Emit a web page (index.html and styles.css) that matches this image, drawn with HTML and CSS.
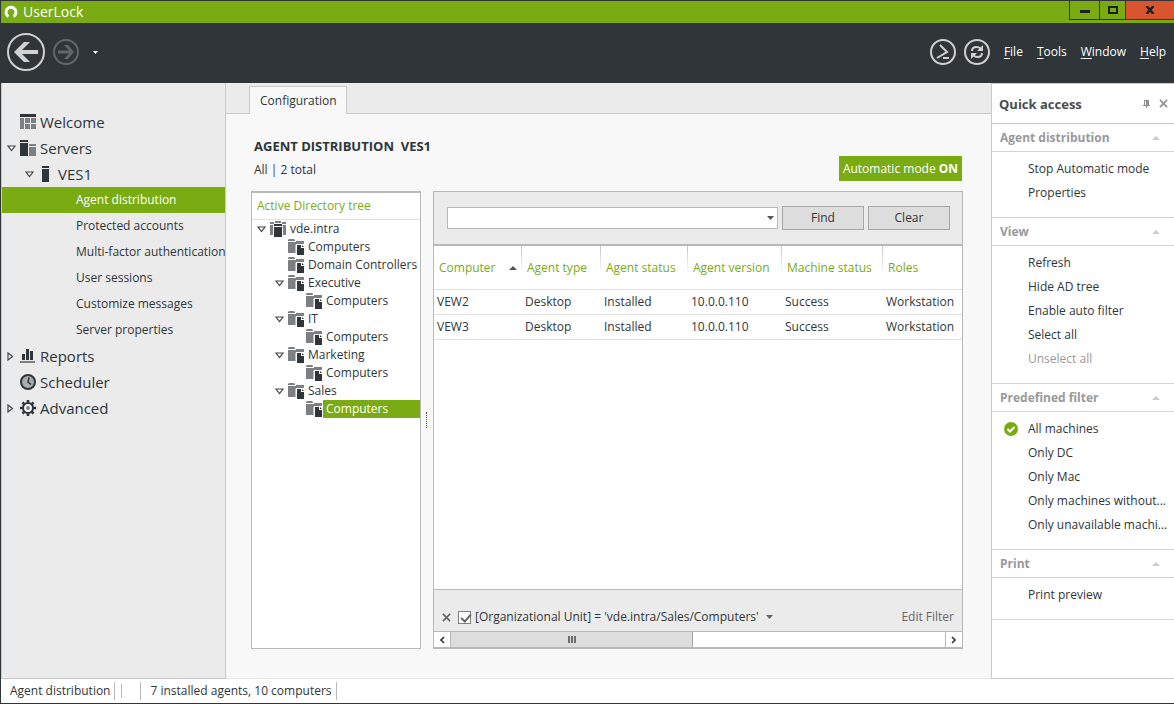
FILE: index.html
```html
<!DOCTYPE html>
<html lang="en">
<head>
    <meta charset="UTF-8">
    <meta name="viewport" content="width=device-width, initial-scale=1.0">
    <title>UserLock</title>
    <link rel="stylesheet" href="styles.css">
</head>
<body>
    <!-- Shared icons -->
    <svg class="icon-defs" aria-hidden="true">
        <symbol id="open" viewBox="0 0 9 7"><path d="M1 1h7L4.500 5.500z" fill="#fff" stroke="#404548" stroke-width="1.200"/></symbol>
        <symbol id="closed" viewBox="0 0 7 9"><path d="M1 1v7L5.500 4.500z" fill="#fff" stroke="#404548" stroke-width="1.200"/></symbol>
        <symbol id="folder" viewBox="0 0 16 16">
            <path d="M0 1l1-1h5l1 1v1H0zM0 3h8V2h8v3H8v9H0z" fill="#7c8083"/>
            <path d="M8 15V5.500h8" fill="none" stroke="#fff"/>
            <path d="M9 6h4v3h3v7H9z" fill="#2f3538"/>
            <path d="M14 6l2 2h-2z" fill="#2f3538"/>
        </symbol>
        <symbol id="up" viewBox="0 0 8 4"><path d="M0 4l4-4 4 4z" fill="currentColor"/></symbol>
        <symbol id="down" viewBox="0 0 7 4"><path d="M0 0h7L3.500 4z" fill="currentColor"/></symbol>
        <symbol id="cross" viewBox="0 0 10 10"><path d="M1 1l8 8M9 1L1 9" fill="none" stroke="currentColor" stroke-width="1.700"/></symbol>
    </svg>

    <div class="window">
        <header class="titlebar">
            <svg class="logo" width="14" height="14" viewBox="0 0 14 14"><path d="M4.500 11.500A5 5 0 1 1 9.500 11.500" fill="none" stroke="#fff" stroke-width="3"/></svg>
            <span class="app-name">UserLock</span>
            <div class="window-buttons">
                <button class="win-btn minimize" aria-label="Minimize"><svg width="10" height="10" viewBox="0 0 10 10"><path d="M0 6.500h10" stroke="#1d2022" stroke-width="3"/></svg></button>
                <button class="win-btn maximize" aria-label="Maximize"><svg width="10" height="8" viewBox="0 0 10 8"><path d="M1 1h8v6H1z" fill="none" stroke="#1d2022" stroke-width="2"/></svg></button>
                <button class="win-btn close" aria-label="Close"><svg width="10" height="8" viewBox="0 0 10 8"><path d="M1.500 0l7 8M8.500 0l-7 8" stroke="#1d2022" stroke-width="2.400"/></svg></button>
            </div>
        </header>

        <div class="toolbar">
            <button class="tool-btn" aria-label="Back"><svg width="38" height="38" viewBox="0 0 38 38"><circle cx="19" cy="19" r="18" fill="none" stroke="#d0d2d2" stroke-width="2"/><path d="M7 19L17 9h6l-8 8h16v4H15l8 8h-6z" fill="#d0d2d2"/></svg></button>
            <button class="tool-btn" aria-label="Forward"><svg width="26" height="26" viewBox="0 0 26 26"><circle cx="13" cy="13" r="12" fill="none" stroke="#62676a" stroke-width="2"/><path d="M21 13l-6 7h-4l5-5.500H5v-3h11L11 6h4z" fill="#62676a"/></svg></button>
            <button class="tool-btn history" aria-label="History"><svg width="5" height="3"><use href="#down"/></svg></button>
            <nav class="menu">
                <button class="tool-btn" aria-label="PowerShell"><svg width="26" height="26" viewBox="0 0 26 26"><circle cx="13" cy="13" r="12" fill="none" stroke="#d0d2d2" stroke-width="2"/><path d="M10 6l7 7L7 19" fill="none" stroke="#d0d2d2" stroke-width="2"/><path d="M13 19h6" stroke="#d0d2d2" stroke-width="2"/></svg></button>
                <button class="tool-btn" aria-label="Refresh"><svg width="26" height="26" viewBox="0 0 26 26"><circle cx="13" cy="13" r="12" fill="none" stroke="#d0d2d2" stroke-width="2"/><path d="M8 12Q8 8 12.500 8Q15 8 16.500 9.500M18 14Q18 18 13.500 18Q11 18 9.500 16.500" fill="none" stroke="#d0d2d2" stroke-width="2"/><path d="M19 6v6h-6zM7 20v-6h6z" fill="#d0d2d2"/></svg></button>
                <a href="#"><u>F</u>ile</a>
                <a href="#"><u>T</u>ools</a>
                <a href="#"><u>W</u>indow</a>
                <a href="#"><u>H</u>elp</a>
            </nav>
        </div>

        <div class="content">
            <nav class="sidebar">
                <a class="nav-item" href="#"><span class="arrow"></span><svg width="16" height="16" viewBox="0 0 16 16"><path d="M0 0h16v3H0z" fill="#2f3538"/><path d="M0 4h4v11H0zM5 4h5v5H5zM11 4h5v5h-5zM5 10h5v5H5zM11 10h5v5h-5z" fill="#7c8083"/></svg>Welcome</a>
                <a class="nav-item" href="#"><span class="arrow"><svg width="9" height="7"><use href="#open"/></svg></span><svg width="16" height="16" viewBox="0 0 16 16"><path d="M0 0h8v2H0zM0 3h8v13H0z" fill="#2f3538"/><path d="M9 4h7v2H9zM9 7h7v9H9z" fill="#7c8083"/></svg>Servers</a>
                <a class="nav-item child" href="#"><span class="arrow"><svg width="9" height="7"><use href="#open"/></svg></span><svg width="16" height="16" viewBox="0 0 16 16"><path d="M4 0h7v2H4zM4 3h7v13H4z" fill="#2f3538"/></svg>VES1</a>
                <a class="nav-sub selected" href="#">Agent distribution</a>
                <a class="nav-sub" href="#">Protected accounts</a>
                <a class="nav-sub" href="#">Multi-factor authentication</a>
                <a class="nav-sub" href="#">User sessions</a>
                <a class="nav-sub" href="#">Customize messages</a>
                <a class="nav-sub" href="#">Server properties</a>
                <a class="nav-item" href="#"><span class="arrow"><svg width="7" height="9"><use href="#closed"/></svg></span><svg width="16" height="16" viewBox="0 0 16 16"><path d="M2 6h3v6H2zM6 1h3v11H6zM10 3h3v9h-3z" fill="#2f3538"/><path d="M0 13h15v2H0z" fill="#7c8083"/></svg>Reports</a>
                <a class="nav-item" href="#"><span class="arrow"></span><svg width="16" height="16" viewBox="0 0 16 16"><circle cx="8" cy="8" r="7" fill="#a9abac" stroke="#2f3538" stroke-width="2"/><path d="M9 3.500L8 8l3 2.500" fill="none" stroke="#2f3538" stroke-width="1.500"/></svg>Scheduler</a>
                <a class="nav-item" href="#"><span class="arrow"><svg width="7" height="9"><use href="#closed"/></svg></span><svg width="16" height="16" viewBox="0 0 16 16"><circle cx="8" cy="8" r="5" fill="#fff" stroke="#2f3538" stroke-width="2.200"/><path d="M8 0v3M8 13v3M0 8h3M13 8h3M2.500 2.500l2 2M11.500 11.500l2 2M2.500 13.500l2-2M11.500 4.500l2-2" stroke="#2f3538" stroke-width="2.600"/><circle cx="8" cy="8" r="2" fill="#7c8083"/></svg>Advanced</a>
            </nav>

            <main class="main">
                <div class="tabs"><button class="tab">Configuration</button></div>
                <div class="page">
                    <div class="page-head">
                        <div>
                            <h1>AGENT DISTRIBUTION&nbsp; VES1</h1>
                            <p>All | 2 total</p>
                        </div>
                        <button class="mode">Automatic mode <b>ON</b></button>
                    </div>
                    <div class="panels">
                        <section class="tree">
                            <h2>Active Directory tree</h2>
                            <ul>
                                <li><span class="arrow"><svg width="9" height="7"><use href="#open"/></svg></span><svg width="16" height="16" viewBox="0 0 16 16"><path d="M0 1h4v2H0zM0 4h3v10H0zM12 1h4v2h-4zM13 4h3v10h-3z" fill="#7c8083"/><path d="M4 3h8v2H4zM4 6h8v10H4z" fill="#2f3538"/><path d="M5 0h6v2H5z" fill="#7c8083"/></svg><span class="label">vde.intra</span></li>
                                <li class="level-1"><span class="arrow"></span><svg width="16" height="16"><use href="#folder"/></svg><span class="label">Computers</span></li>
                                <li class="level-1"><span class="arrow"></span><svg width="16" height="16"><use href="#folder"/></svg><span class="label">Domain Controllers</span></li>
                                <li class="level-1"><span class="arrow"><svg width="9" height="7"><use href="#open"/></svg></span><svg width="16" height="16"><use href="#folder"/></svg><span class="label">Executive</span></li>
                                <li class="level-2"><span class="arrow"></span><svg width="16" height="16"><use href="#folder"/></svg><span class="label">Computers</span></li>
                                <li class="level-1"><span class="arrow"><svg width="9" height="7"><use href="#open"/></svg></span><svg width="16" height="16"><use href="#folder"/></svg><span class="label">IT</span></li>
                                <li class="level-2"><span class="arrow"></span><svg width="16" height="16"><use href="#folder"/></svg><span class="label">Computers</span></li>
                                <li class="level-1"><span class="arrow"><svg width="9" height="7"><use href="#open"/></svg></span><svg width="16" height="16"><use href="#folder"/></svg><span class="label">Marketing</span></li>
                                <li class="level-2"><span class="arrow"></span><svg width="16" height="16"><use href="#folder"/></svg><span class="label">Computers</span></li>
                                <li class="level-1"><span class="arrow"><svg width="9" height="7"><use href="#open"/></svg></span><svg width="16" height="16"><use href="#folder"/></svg><span class="label">Sales</span></li>
                                <li class="level-2"><span class="arrow"></span><svg width="16" height="16"><use href="#folder"/></svg><span class="label selected">Computers</span></li>
                            </ul>
                        </section>
                        <div class="splitter"></div>
                        <section class="grid">
                            <form class="search">
                                <div class="combo">
                                    <input type="text" aria-label="Search text">
                                    <svg width="7" height="4"><use href="#down"/></svg>
                                </div>
                                <button type="button">Find</button>
                                <button type="button">Clear</button>
                            </form>
                            <div class="table-wrap">
                                <table>
                                    <colgroup><col class="col-computer"><col class="col-type"><col class="col-status"><col class="col-version"><col class="col-machine"><col></colgroup>
                                    <thead>
                                        <tr><th><div class="sorted">Computer <svg width="8" height="4"><use href="#up"/></svg></div></th><th>Agent type</th><th>Agent status</th><th>Agent version</th><th>Machine status</th><th>Roles</th></tr>
                                    </thead>
                                    <tbody>
                                        <tr><td>VEW2</td><td>Desktop</td><td>Installed</td><td>10.0.0.110</td><td>Success</td><td>Workstation</td></tr>
                                        <tr><td>VEW3</td><td>Desktop</td><td>Installed</td><td>10.0.0.110</td><td>Success</td><td>Workstation</td></tr>
                                    </tbody>
                                </table>
                            </div>
                            <div class="filter-bar">
                                <button class="plain" aria-label="Remove filter"><svg width="9" height="9"><use href="#cross"/></svg></button>
                                <input type="checkbox" id="filter-on" checked>
                                <label for="filter-on">[Organizational Unit] = 'vde.intra/Sales/Computers'</label>
                                <button class="plain recent" aria-label="Recent filters"><svg width="7" height="4"><use href="#down"/></svg></button>
                                <button class="plain edit">Edit Filter</button>
                            </div>
                            <div class="scrollbar">
                                <button aria-label="Scroll left"><svg width="6" height="8" viewBox="0 0 6 8"><path d="M5 1L2 4l3 3" fill="none" stroke="#333" stroke-width="1.600"/></svg></button>
                                <div class="track"><div class="thumb"><svg width="8" height="7" viewBox="0 0 8 7"><path d="M1 0v7M4 0v7M7 0v7" stroke="#6c6c6c" stroke-width="2"/></svg></div></div>
                                <button aria-label="Scroll right"><svg width="6" height="8" viewBox="0 0 6 8"><path d="M1 1l3 3-3 3" fill="none" stroke="#333" stroke-width="1.600"/></svg></button>
                            </div>
                        </section>
                    </div>
                </div>
            </main>

            <aside class="quick">
                <div class="quick-head">
                    <h2>Quick access</h2>
                    <button class="plain" aria-label="Pin"><svg width="7" height="8" viewBox="0 0 7 8"><path d="M1 0h5v5H1zM0 5h7v1H0zM3 6h1v2H3z" fill="#8a8d8f"/><path d="M2 1h1v4H2z" fill="#fff"/></svg></button>
                    <button class="plain light" aria-label="Close panel"><svg width="9" height="9"><use href="#cross"/></svg></button>
                </div>
                <section>
                    <h3>Agent distribution <svg width="8" height="4"><use href="#up"/></svg></h3>
                    <div class="links">
                        <a href="#">Stop Automatic mode</a>
                        <a href="#">Properties</a>
                    </div>
                </section>
                <section>
                    <h3>View <svg width="8" height="4"><use href="#up"/></svg></h3>
                    <div class="links">
                        <a href="#">Refresh</a>
                        <a href="#">Hide AD tree</a>
                        <a href="#">Enable auto filter</a>
                        <a href="#">Select all</a>
                        <a class="disabled" href="#">Unselect all</a>
                    </div>
                </section>
                <section>
                    <h3>Predefined filter <svg width="8" height="4"><use href="#up"/></svg></h3>
                    <div class="links">
                        <a class="checked" href="#"><svg width="14" height="14" viewBox="0 0 14 14"><circle cx="7" cy="7" r="7" fill="#7aab13"/><path d="M3.500 7l2.500 2.500L10.500 5" fill="none" stroke="#fff" stroke-width="2"/></svg>All machines</a>
                        <a href="#">Only DC</a>
                        <a href="#">Only Mac</a>
                        <a href="#">Only machines without...</a>
                        <a href="#">Only unavailable machi...</a>
                    </div>
                </section>
                <section>
                    <h3>Print <svg width="8" height="4"><use href="#up"/></svg></h3>
                    <div class="links">
                        <a href="#">Print preview</a>
                    </div>
                </section>
            </aside>
        </div>

        <footer class="status">
            <span class="cell">Agent distribution</span>
            <span class="cell gap"></span>
            <span class="cell gap wide"></span>
            <span class="cell">7 installed agents, 10 computers</span>
        </footer>
    </div>
</body>
</html>
```
FILE: styles.css
```css
* {
    box-sizing: border-box;
}
body {
    margin: 0;
    font-family: "Open Sans", "Noto Sans", sans-serif;
    font-size: 12px;
    line-height: 18px;
    color: #2f3538;
}
h1, h2, h3, p, ul {
    margin: 0;
    padding: 0;
}
svg {
    display: block;
    flex: none;
}
a {
    color: inherit;
    text-decoration: none;
}
button, input {
    font: inherit;
    color: inherit;
    margin: 0;
}
button {
    display: flex;
    align-items: center;
    justify-content: center;
    padding: 0;
    border: 0;
    background: none;
}
.icon-defs {
    position: absolute;
    width: 0;
    height: 0;
}
.window {
    display: flex;
    flex-direction: column;
    min-height: 100vh;
    border: 1px solid #2f3538;
    border-right: 0;
    background: #fff;
}

/* Title bar and toolbar */
.titlebar {
    display: flex;
    align-items: center;
    height: 22px;
    padding-left: 3px;
    background: #7aab13;
    color: #fff;
}
.app-name {
    margin-left: 5px;
    font-size: 14px;
}
.window-buttons {
    display: flex;
    align-self: flex-start;
    margin-left: auto;
}
.win-btn {
    width: 26px;
    height: 19px;
    border-left: 1px solid #2f3538;
    border-bottom: 1px solid #2f3538;
}
.win-btn.minimize {
    width: 30px;
}
.win-btn.close {
    width: 49px;
    background: #d9552f;
}
.toolbar {
    display: flex;
    align-items: center;
    gap: 8px;
    height: 60px;
    padding: 0 8px 2px 6px;
    background: #2f3538;
    color: #fff;
}
.history {
    margin-left: 6px;
}
.menu {
    display: flex;
    align-items: center;
    gap: 14px;
    margin-left: auto;
}
.menu .tool-btn + .tool-btn {
    margin-left: -6px;
}
.menu u {
    text-underline-offset: 2px;
}

/* Left navigation */
.content {
    display: flex;
    flex: 1;
}
.sidebar {
    flex: none;
    width: 225px;
    padding-top: 26px;
    border: 1px solid #c9c9c9;
    border-top: 0;
    background: #ebebeb;
}
.arrow {
    display: flex;
    align-items: center;
    flex: none;
    width: 13px;
}
.nav-item {
    display: flex;
    align-items: center;
    gap: 4px;
    height: 26px;
    padding-left: 5px;
    font-size: 15px;
}
.nav-item .arrow {
    width: 9px;
}
.nav-item.child {
    padding-left: 23px;
}
.nav-sub {
    display: block;
    padding-left: 74px;
    line-height: 26px;
    white-space: nowrap;
}
.selected {
    background: #7aab13;
    color: #fff;
}

/* Main area */
.main {
    display: flex;
    flex-direction: column;
    flex: 1;
    min-width: 0;
    background: #f8f8f8;
    border-bottom: 1px solid #e8e8e8;
}
.tabs {
    display: flex;
    align-items: flex-end;
    height: 31px;
    padding-left: 23px;
    background: #ebebeb;
    box-shadow: inset 0 -1px #c9c9c9;
}
.tab {
    height: 28px;
    padding: 0 9px 0 10px;
    border: 1px solid #c9c9c9;
    border-bottom: 0;
    background: #f8f8f8;
}
.page {
    display: flex;
    flex-direction: column;
    flex: 1;
    padding: 21px 28px 29px 25px;
}
.page-head {
    display: flex;
    justify-content: space-between;
    align-items: flex-end;
    height: 56px;
    padding-bottom: 10px;
}
.page-head > div {
    height: 47px;
}
.page-head h1 {
    padding-left: 3px;
    font-size: 13px;
    line-height: 24px;
}
.page-head p {
    padding-left: 3px;
    line-height: 24px;
}
.mode {
    height: 25px;
    padding: 0 4px;
    margin-right: 1px;
    gap: 3px;
    background: #7aab13;
    color: #fff;
}
.panels {
    display: flex;
    flex: 1;
}
.tree {
    flex: none;
    width: 170px;
    border: 1px solid #b8b8b8;
    border-top-width: 2px;
    background: #fff;
}
.tree h2 {
    padding-left: 5px;
    border-bottom: 1px solid #e0e0e0;
    font-size: 12px;
    font-weight: normal;
    line-height: 26px;
    color: #7aab13;
}
.tree ul {
    list-style: none;
}
.tree li {
    display: flex;
    align-items: center;
    height: 18px;
    padding-left: 5px;
}
.tree .level-1 {
    padding-left: 23px;
}
.tree .level-2 {
    padding-left: 41px;
}
.label {
    flex: 1;
    margin-left: 1px;
    padding-left: 3px;
    white-space: nowrap;
}
.splitter {
    align-self: center;
    height: 16px;
    margin: 0 6px 0 5px;
    border-left: 1px dotted #555;
}

/* Agent grid */
.grid {
    display: flex;
    flex-direction: column;
    flex: 1;
    min-width: 0;
    border: 1px solid #b8b8b8;
    background: #fff;
}
.search {
    display: flex;
    align-items: center;
    gap: 4px;
    height: 54px;
    padding: 0 12px 0 13px;
    border-bottom: 2px solid #b8b8b8;
    background: #ebebeb;
}
.combo {
    display: flex;
    align-items: center;
    flex: 1;
    height: 22px;
    padding-right: 3px;
    border: 1px solid #b8b8b8;
    background: #fff;
    color: #555;
}
.combo input {
    flex: 1;
    min-width: 0;
    border: 0;
    outline: 0;
}
.search button {
    width: 82px;
    height: 24px;
    border: 1px solid #a5a5a5;
    background: #ddd;
}
.table-wrap {
    flex: 1;
}
table {
    width: 100%;
    border-spacing: 0;
    table-layout: fixed;
}
.col-computer {
    width: 88px;
}
.col-type {
    width: 79px;
}
.col-status {
    width: 87px;
}
.col-version {
    width: 94px;
}
.col-machine {
    width: 101px;
}
th, td {
    padding: 0 3px;
    border-bottom: 1px solid #e0e0e0;
    text-align: left;
    font-weight: normal;
    white-space: nowrap;
}
th {
    height: 44px;
    padding-left: 5px;
    background: linear-gradient(#c4c4c4, #fff) top right / 1px 28px no-repeat;
    color: #7aab13;
}
th:last-child {
    background: none;
}
td {
    height: 25px;
}
.sorted {
    display: flex;
    align-items: center;
    justify-content: space-between;
    padding-right: 2px;
}
.sorted svg {
    color: #555;
}
.plain svg {
    color: #5f6366;
}
.filter-bar {
    display: flex;
    align-items: center;
    height: 42px;
    padding: 13px 8px 0;
    border-top: 1px solid #b8b8b8;
    background: #ebebeb;
}
.filter-bar input {
    appearance: none;
    width: 13px;
    height: 13px;
    margin: 0 4px 0 7px;
    border: 1px solid #7f7f7f;
    background: #fff;
}
.filter-bar input:checked::before {
    content: "";
    display: block;
    width: 8px;
    height: 4px;
    margin: 2px 0 0 2px;
    border: solid #666;
    border-width: 0 0 2px 2px;
    transform: rotate(-48deg);
}
.recent {
    margin-left: 7px;
}
.edit {
    margin-left: auto;
    color: #666;
}
.scrollbar {
    display: flex;
    height: 17px;
    border: 1px solid #b8b8b8;
    border-width: 1px 0;
}
.scrollbar button {
    width: 16px;
}
.track {
    flex: 1;
    border: 1px solid #b8b8b8;
    border-width: 0 1px;
}
.thumb {
    display: flex;
    align-items: center;
    justify-content: center;
    width: 49%;
    height: 100%;
    border-right: 1px solid #a5a5a5;
    background: #ddd;
}

/* Quick access panel */
.quick {
    flex: none;
    width: 183px;
    border: 1px solid #c9c9c9;
    border-right: 0;
}
.quick-head {
    display: flex;
    align-items: center;
    gap: 9px;
    height: 40px;
    padding: 0 6px 0 7px;
    border-bottom: 1px solid #c9c9c9;
}
.quick-head h2 {
    flex: 1;
    font-size: 13px;
    color: #484c4f;
}
.quick-head .light svg {
    color: #8a8d8f;
}
.quick section {
    border-bottom: 1px solid #d4d4d4;
}
.quick h3 {
    display: flex;
    align-items: center;
    justify-content: space-between;
    height: 28px;
    padding: 0 14px 0 8px;
    border-bottom: 1px solid #d4d4d4;
    font-size: 12px;
    color: #999;
}
.quick h3 svg {
    color: #ccc;
}
.links {
    padding: 5px 0 12px;
}
.links a {
    display: flex;
    align-items: center;
    height: 24px;
    padding-left: 36px;
    white-space: nowrap;
}
.links .checked {
    gap: 10px;
    padding-left: 12px;
}
.links .disabled {
    color: #999;
}

/* Status bar */
.status {
    display: flex;
    align-items: center;
    height: 24px;
}
.status .cell {
    height: 18px;
    padding: 0 4px 0 9px;
    border-right: 1px solid #b8b8b8;
}
.status .gap {
    width: 7px;
    height: 14px;
    padding: 0;
}
.status .wide {
    width: 19px;
    height: 18px;
}
```
